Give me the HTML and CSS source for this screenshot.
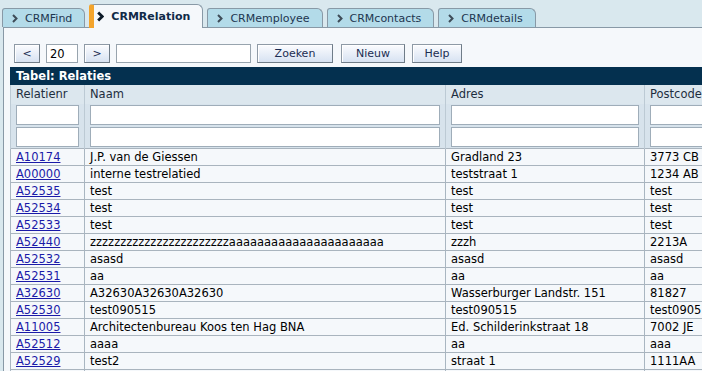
FILE: index.html
```html
<!DOCTYPE html>
<html lang="nl">
<head>
    <meta charset="UTF-8">
    <title>CRMRelation</title>
    <link rel="stylesheet" href="styles.css">
</head>
<body>
    <div class="tabs">
        <div class="tab"><svg class="chev" viewBox="0 0 6 9"><polyline points="1,1 4.5,4.5 1,8"/></svg>CRMFind</div>
        <div class="tab active"><svg class="chev" viewBox="0 0 6 9"><polyline points="1,1 4.5,4.5 1,8"/></svg>CRMRelation</div>
        <div class="tab"><svg class="chev" viewBox="0 0 6 9"><polyline points="1,1 4.5,4.5 1,8"/></svg>CRMemployee</div>
        <div class="tab"><svg class="chev" viewBox="0 0 6 9"><polyline points="1,1 4.5,4.5 1,8"/></svg>CRMcontacts</div>
        <div class="tab"><svg class="chev" viewBox="0 0 6 9"><polyline points="1,1 4.5,4.5 1,8"/></svg>CRMdetails</div>
    </div>

    <div class="panel">
        <div class="toolbar">
            <button class="btn btn-small">&lt;</button>
            <input class="field field-count" type="text" value="20">
            <button class="btn btn-small">&gt;</button>
            <input class="field field-search" type="text">
            <button class="btn btn-zoeken">Zoeken</button>
            <button class="btn btn-nieuw">Nieuw</button>
            <button class="btn btn-help">Help</button>
        </div>

        <div class="table-title">Tabel: Relaties</div>
        <table class="grid">
            <colgroup>
                <col class="c-nr"><col class="c-naam"><col class="c-adres"><col class="c-pc">
            </colgroup>
            <thead>
                <tr class="head">
                    <th>Relatienr</th><th>Naam</th><th>Adres</th><th>Postcode</th>
                </tr>
                <tr class="filter">
                    <td><input type="text"></td><td><input type="text"></td><td><input type="text"></td><td><input type="text"></td>
                </tr>
                <tr class="filter">
                    <td><input type="text"></td><td><input type="text"></td><td><input type="text"></td><td><input type="text"></td>
                </tr>
            </thead>
            <tbody id="rows"></tbody>
        </table>
    </div>

    <script>
        const relaties = [
            ['A10174', 'J.P. van de Giessen', 'Gradland 23', '3773 CB'],
            ['A00000', 'interne testrelatied', 'teststraat 1', '1234 AB'],
            ['A52535', 'test', 'test', 'test'],
            ['A52534', 'test', 'test', 'test'],
            ['A52533', 'test', 'test', 'test'],
            ['A52440', 'zzzzzzzzzzzzzzzzzzzzzzzaaaaaaaaaaaaaaaaaaaaaa', 'zzzh', '2213A'],
            ['A52532', 'asasd', 'asasd', 'asasd'],
            ['A52531', 'aa', 'aa', 'aa'],
            ['A32630', 'A32630A32630A32630', 'Wasserburger Landstr. 151', '81827'],
            ['A52530', 'test090515', 'test090515', 'test090515'],
            ['A11005', 'Architectenbureau Koos ten Hag BNA', 'Ed. Schilderinkstraat 18', '7002 JE'],
            ['A52512', 'aaaa', 'aa', 'aaa'],
            ['A52529', 'test2', 'straat 1', '1111AA'],
            ['', '', '', '']
        ];

        const body = document.getElementById('rows');
        relaties.forEach(r => {
            const tr = document.createElement('tr');
            const nr = document.createElement('td');
            if (r[0]) {
                const link = document.createElement('a');
                link.href = '#';
                link.textContent = r[0];
                nr.appendChild(link);
            }
            tr.appendChild(nr);
            for (let i = 1; i < r.length; i++) {
                const td = document.createElement('td');
                td.textContent = r[i];
                tr.appendChild(td);
            }
            body.appendChild(tr);
        });
    </script>
</body>
</html>
```

FILE: styles.css
```css
body {
    margin: 0;
    background-color: #d9e8ee;
    font-family: "DejaVu Sans", Verdana, sans-serif;
    font-size: 11px;
    color: #000;
    overflow: hidden;
    height: 371px;
}

/* tabs */
.tabs {
    display: flex;
    align-items: flex-end;
    gap: 4px;
    height: 27px;
    padding-left: 2px;
}

.tab {
    display: flex;
    align-items: center;
    gap: 7px;
    height: 19px;
    padding: 0 12px 0 9px;
    background-color: #b3dbe9;
    border: 1px solid #8899a6;
    border-bottom: none;
    border-radius: 3px 6px 0 0;
    color: #1d3650;
    box-sizing: border-box;
}

.tab .chev {
    width: 6px;
    height: 9px;
    fill: none;
    stroke: #3e4c58;
    stroke-width: 2;
}

.tab.active {
    height: 24px;
    margin-bottom: -1px;
    padding-bottom: 1px;
    background-color: #f5f8fb;
    border-left: 5px solid #f3a42c;
    padding-left: 3px;
    font-weight: bold;
    color: #102a48;
    position: relative;
    z-index: 1;
}

.tab.active .chev {
    width: 7px;
    height: 11px;
    stroke: #0d1a28;
    stroke-width: 2.4;
}

/* panel */
.panel {
    margin-left: 3px;
    border-left: 1px solid #8899a6;
    border-top: 1px solid #8899a6;
    background-color: #f5f8fb;
    height: 400px;
    padding: 16px 0 0 6px;
}

.toolbar {
    display: flex;
    align-items: center;
    gap: 6px;
    padding-left: 4px;
    height: 19px;
}

.btn {
    height: 19px;
    padding: 0;
    font-family: inherit;
    font-size: 11px;
    color: #1b2d52;
    background: linear-gradient(#fbfcfe, #d7e2f2);
    border: 1px solid #8e9aa6;
    border-right-color: #6f7c88;
    border-bottom-color: #6f7c88;
    box-shadow: inset 1px 1px 0 #fff;
}

.btn-small {
    width: 26px;
}

.btn-zoeken {
    width: 76px;
}

.btn-nieuw {
    width: 64px;
    margin-left: 2px;
}

.btn-help {
    width: 50px;
    margin-left: 1px;
}

.field {
    height: 19px;
    box-sizing: border-box;
    border: 1px solid #98a4ae;
    background: #fff;
    font-family: inherit;
    font-size: 11.5px;
    padding: 0 3px;
}

.field-count {
    width: 32px;
}

.field-search {
    width: 135px;
}

/* table */
.table-title {
    margin-top: 4px;
    height: 18px;
    line-height: 18px;
    background-color: #04304f;
    color: #fff;
    font-weight: bold;
    font-size: 11.5px;
    padding-left: 6px;
    width: 800px;
}

.grid {
    border-collapse: collapse;
    table-layout: fixed;
    width: 800px;
    font-size: 11.5px;
    border-left: 1px solid #9aa8b4;
}

.c-nr { width: 74px; }
.c-naam { width: 361px; }
.c-adres { width: 199px; }
.c-pc { width: 166px; }

.grid th,
.grid td {
    padding: 0 0 0 5px;
    text-align: left;
    font-weight: normal;
    white-space: nowrap;
    overflow: hidden;
    border-left: 1px solid #a9b6c1;
}

.grid .head th {
    height: 19px;
    line-height: 17px;
    background-color: #dce7ee;
    color: #1e2e3e;
    border-left-color: #bccad4;
}

.grid .filter td {
    height: 22px;
    background-color: #d7e3ec;
    border-left-color: #bccad4;
    padding: 0 5px 0 5px;
}

.grid .filter input {
    display: block;
    width: 100%;
    height: 20px;
    box-sizing: border-box;
    border: 1px solid #9fadb9;
    background: #fff;
}

.grid tbody td {
    height: 16px;
    line-height: 16px;
    border-bottom: 1px solid #a9b4be;
    background-color: #f5f8fb;
}

.grid tbody tr:first-child td {
    border-top: 1px solid #a9b4be;
}

.grid a {
    color: #1a1aa8;
}
```
